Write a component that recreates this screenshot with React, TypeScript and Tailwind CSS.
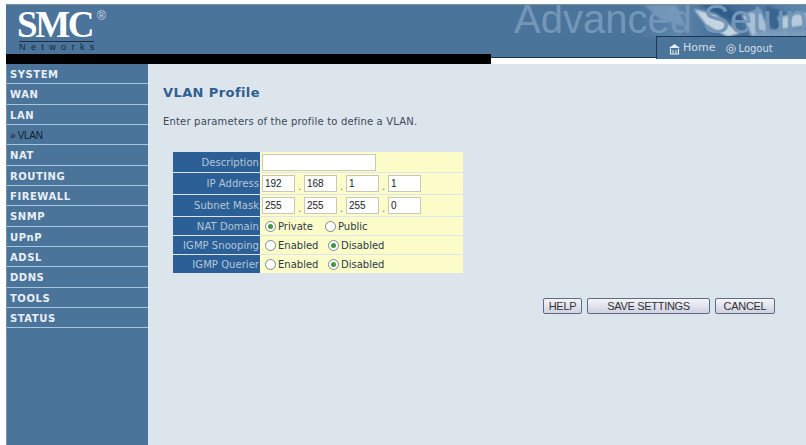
const menu = ["SYSTEM", "WAN", "LAN", "» VLAN", "NAT", "ROUTING", "FIREWALL", "SNMP", "UPnP", "ADSL", "DDNS", "TOOLS", "STATUS"];

function Row({ label, h, children }: { label: string; h: string; children: React.ReactNode }) {
  return (
    <div className={`flex ${h} mb-px`}>
      <div className="w-[87px] bg-[#2c5f95] text-[#b4c7da] text-[10px] tracking-[0.05px] pr-px flex items-center justify-end whitespace-nowrap font-['DejaVu_Sans',sans-serif]">{label}</div>
      <div className="w-[203px] bg-[#fdfdc9] flex items-center pl-[2px] text-[10px] text-[#2a3a4a] font-['DejaVu_Sans',sans-serif]">{children}</div>
    </div>
  );
}

function Box({ v }: { v?: string }) {
  return <div className="w-[33px] h-[17px] bg-white border border-[#c8c8b8] pl-[2px] text-[10px] leading-[15px] text-[#222] font-['Liberation_Sans',sans-serif]">{v}</div>;
}

function Ip({ vals }: { vals: string[] }) {
  return (
    <div className="flex items-center">
      {vals.map((v, i) => (
        <div key={i} className="flex items-center">
          {i > 0 && <span className="w-[9px] text-center pt-[6px] text-[#5a7a99]">.</span>}
          <Box v={v} />
        </div>
      ))}
    </div>
  );
}

function Radio({ on, label, w }: { on?: boolean; label: string; w: string }) {
  return (
    <div className={`flex items-center gap-[2px] ${w}`}>
      <div className="w-[11px] h-[11px] rounded-full bg-white border border-[#7b8794] flex items-center justify-center shrink-0">
        {on && <div className="w-[5px] h-[5px] rounded-full bg-[#3c9a45]" />}
      </div>
      <span>{label}</span>
    </div>
  );
}

function Btn({ label, w }: { label: string; w: string }) {
  return (
    <div className={`${w} h-[16px] rounded-[2px] border border-[#5a6c86] bg-gradient-to-b from-[#f4f4f9] to-[#d0d1e1] flex items-center justify-center text-[11px] tracking-[-0.3px] text-[#333] font-['Liberation_Sans',sans-serif]`}>{label}</div>
  );
}

function Photo() {
  return (
    <svg className="absolute right-0 top-0" width="170" height="32" viewBox="0 0 170 32">
      <defs>
        <linearGradient id="base" x1="0" x2="1" y1="0" y2="0">
          <stop offset="0" stopColor="#4b749b" />
          <stop offset="0.25" stopColor="#5d84aa" />
          <stop offset="0.55" stopColor="#3f6b97" />
          <stop offset="1" stopColor="#5f88ad" />
        </linearGradient>
        <filter id="soft"><feGaussianBlur stdDeviation="1.1" /></filter>
      </defs>
      <rect width="170" height="32" fill="url(#base)" />
      <g filter="url(#soft)">
        <polygon points="8,0 40,0 50,22 24,14" fill="#86a8c6" opacity="0.6" />
        <polygon points="58,4 80,10 104,28 92,32 70,20" fill="#c4d4e2" />
        <polygon points="64,0 88,0 112,16 100,18" fill="#2f5d8b" />
        <polygon points="106,10 124,4 132,24 116,32" fill="#a7c0d6" />
        <polygon points="130,0 150,8 146,28 134,22" fill="#396690" />
        <polygon points="142,12 170,8 170,20 146,24" fill="#b6cadc" />
        <polygon points="120,26 170,24 170,32 118,32" fill="#7d9fbf" />
      </g>
    </svg>
  );
}

export default function App() {
  return (
    <div className="w-[806px] h-[445px] bg-white overflow-hidden pt-1 pl-[6px] font-['DejaVu_Sans',sans-serif]">
      <header className="relative h-[50px] bg-[#4b749b] border-t border-[#7f8f9f]">
        <div className="absolute inset-0 overflow-hidden">
          <Photo />
          <div className="absolute left-[508px] top-[-9px] text-[40px] leading-[46px] text-[#7497b8] whitespace-nowrap font-['Liberation_Sans',sans-serif]">Advanced Setup</div>
        </div>
        <div className="absolute left-[11px] top-[4px] w-[96px] text-white">
          <div className="flex items-start h-[32px]">
            <span className="text-[37px] leading-[32px] font-bold tracking-[-2.4px] font-['Liberation_Serif',serif]">SMC</span>
            <span className="text-[12px] leading-[12px] ml-[5px] mt-[1px] text-[#cfdbe6] font-['Liberation_Sans',sans-serif]">®</span>
          </div>
          <div className="ml-[2px] border-t border-[#1a2e44] w-[75px] text-[#12263a] text-[9px] leading-[9px] pt-px tracking-[5.4px] whitespace-nowrap font-['Liberation_Sans',sans-serif]">Networks</div>
        </div>
        <div className="absolute left-[650px] right-0 top-[31px] h-[23px] bg-[#4b749b] border-t border-l border-[#1f3650] flex items-center pl-[11px] pt-[1px] text-[#d3dfe9]">
          <svg className="mr-[2px]" width="13" height="12" viewBox="0 0 13 12">
            <path d="M1 5 L6.5 1 L12 5 Z" fill="#e4ecf3" />
            <path d="M2.5 5.5 V11 H10.5 V5.5" fill="none" stroke="#e4ecf3" strokeWidth="1.2" />
            <path d="M5 7 V11 M8 7 V11" stroke="#e4ecf3" strokeWidth="1" />
          </svg>
          <span className="text-[11px] mr-[11px]">Home</span>
          <svg className="mr-[2px]" width="10" height="10" viewBox="0 0 10 10">
            <circle cx="5" cy="5" r="4.3" fill="none" stroke="#d3dfe9" strokeWidth="0.9" />
            <circle cx="5" cy="5" r="2" fill="none" stroke="#d3dfe9" strokeWidth="1" />
          </svg>
          <span className="text-[10px]">Logout</span>
        </div>
      </header>
      <div className="flex h-[10px]">
        <div className="w-[485px] bg-black" />
        <div className="flex-1 h-[4px] bg-[#4b749b] flex">
          <div className="w-[165px] border-b border-[#1f3650]" />
          <div className="flex-1 border-b border-[#c4d6e6]" />
        </div>
      </div>
      <div className="flex h-[381px]">
        <nav className="w-[142px] bg-[#4b749b] border-l border-[#7f8f9f]">
          {menu.map((m) => (
            <div key={m} className={`h-[20.33px] border-b border-[#a9c6e0] flex items-center pl-[3px] pt-[2px] ${m.startsWith("»") ? "text-[10px] text-[#10202f] font-['Liberation_Sans',sans-serif] tracking-[-0.3px]" : "text-[10px] font-bold text-[#e9eff5] tracking-[0.55px] font-['DejaVu_Sans',sans-serif]"}`}>{m}</div>
          ))}
        </nav>
        <main className="flex-1 bg-[#dce4ec] relative pt-[21px] pl-[15px]">
          <h1 className="text-[13px] leading-4 font-bold text-[#2f5f8f] tracking-[0.4px]">VLAN Profile</h1>
          <p className="mt-[15px] text-[10px] leading-3 tracking-[0.18px] text-[#3c4a58]">Enter parameters of the profile to define a VLAN.</p>
          <div className="mt-[24px] ml-[10px]">
            <Row label="Description" h="h-[20px]"><div className="w-[114px] h-[17px] bg-white border border-[#c9c9b8]" /></Row>
            <Row label="IP Address" h="h-[21px]"><Ip vals={["192", "168", "1", "1"]} /></Row>
            <Row label="Subnet Mask" h="h-[21px]"><Ip vals={["255", "255", "255", "0"]} /></Row>
            <Row label="NAT Domain" h="h-[18px]"><div className="flex pl-[3px]"><Radio on label="Private" w="w-[60px]" /><Radio label="Public" w="w-[50px]" /></div></Row>
            <Row label="IGMP Snooping" h="h-[18px]"><div className="flex pl-[3px]"><Radio label="Enabled" w="w-[63px]" /><Radio on label="Disabled" w="w-[60px]" /></div></Row>
            <Row label="IGMP Querier" h="h-[18px]"><div className="flex pl-[3px]"><Radio label="Enabled" w="w-[63px]" /><Radio on label="Disabled" w="w-[60px]" /></div></Row>
          </div>
          <div className="absolute left-[395px] top-[234px] flex gap-[5px]">
            <Btn label="HELP" w="w-[39px]" />
            <Btn label="SAVE SETTINGS" w="w-[123px]" />
            <Btn label="CANCEL" w="w-[60px]" />
          </div>
        </main>
      </div>
    </div>
  );
}
